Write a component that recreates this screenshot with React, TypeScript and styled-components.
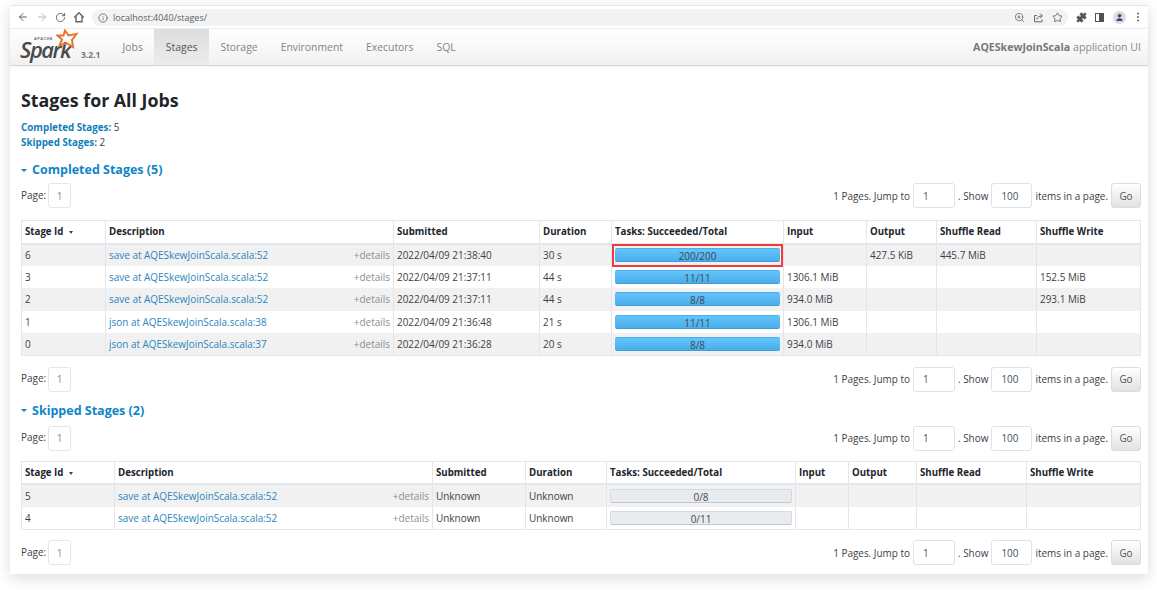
import React from "react";
import styled, { createGlobalStyle } from "styled-components";
import { ArrowLeft, ArrowRight, RotateCw, Info, ZoomIn, Star, Puzzle, User } from "lucide-react";

const Global = createGlobalStyle`
  html, body { margin: 0; padding: 0; background: #fff; }
  body { font-family: "Open Sans", "Liberation Sans", sans-serif; font-size: 9.95px; color: #3d4146; }
  * { box-sizing: border-box; }
`;
const Page = styled.div`padding: 5px 9px 0 10px; width: 1157px; height: 590px; overflow: hidden;`;
const Panel = styled.div`
  height: 569px; background: #fff; display: flex; flex-direction: column;
  box-shadow: 0 4px 14px rgba(0,0,0,.14); border-top: 1px solid #e4e6e9;
`;
const Chrome = styled.div`height: 22px; display: flex; align-items: center; padding: 0 9px 0 7px; background: #fff; color: #5f6368; flex: none;`;
const Nav = styled.div`display: flex; align-items: center; gap: 7px; margin-right: 7px; svg { flex: none; }`;
const Pill = styled.div`
  flex: 1; height: 17px; border-radius: 9px; background: #f1f3f4; display: flex; align-items: center;
  padding: 0 5px 0 6px; gap: 5px; font-size: 9px; color: #5a5e62; margin-top: 1px;
`;
const Url = styled.span`flex: 1;`;
const PillTools = styled.div`display: flex; align-items: center; gap: 8px;`;
const Ext = styled.div`display: flex; align-items: center; gap: 8.5px; margin-left: 7.5px;`;
const SideIcon = styled.span`width: 9px; height: 9px; border: 1.4px solid #4f5357; display: flex; justify-content: flex-end; &::after { content: ""; width: 4px; background: #4f5357; }`;
const Avatar = styled.span`width: 13px; height: 13px; border-radius: 50%; background: #d7dee8; display: flex; align-items: center; justify-content: center; color: #3c4a5e;`;
const Dots = styled.span`width: 2px; height: 2px; background: #5f6368; border-radius: 50%; box-shadow: 0 -3.5px 0 #5f6368, 0 3.5px 0 #5f6368; margin-left: 3px;`;
const Navbar = styled.div`
  height: 38px; flex: none; display: flex; align-items: stretch; padding: 0 7px 0 10px; font-size: 10.4px;
  background: linear-gradient(#fff, #f1f1f1); border-bottom: 1px solid #d6d6d6; border-top: 1px solid #eceeef;
  box-shadow: 0 1px 3px rgba(0,0,0,.05);
`;
const Brand = styled.div`width: 91px; flex: none; position: relative;`;
const LogoWord = styled.span`
  position: absolute; left: 0; top: 12px; font: italic 600 22px/16px "Open Sans", sans-serif; letter-spacing: -1.5px; color: #4a4a4a;
`;
const LogoApache = styled.span`position: absolute; left: 14px; top: 8px; font: 700 3.6px/4px "Liberation Sans", sans-serif; letter-spacing: .7px; color: #666;`;
const LogoStar = styled.svg`position: absolute; left: 36px; top: 0;`;
const Version = styled.span`position: absolute; left: 61px; top: 21px; font-size: 8.5px; font-weight: 700; color: #777; line-height: 10px;`;
const Tab = styled.div<{ $active?: boolean }>`
  padding: 0 11.5px; display: flex; align-items: center; color: ${(p) => (p.$active ? "#555" : "#838383")};
  background: ${(p) => (p.$active ? "linear-gradient(#dcdcdc, #ececec)" : "none")};
`;
const AppName = styled.div`margin-left: auto; display: flex; align-items: center; gap: 3px; color: #8a8a8a; font-size: 10.6px;`;
const AppStrong = styled.strong`color: #777; font-weight: 700;`;
const Main = styled.div`padding: 0 7px 0 11px; flex: 1; display: flex; flex-direction: column;`;
const Title = styled.h3`margin: 22px 0 0; font-size: 17.8px; line-height: 24px; font-weight: 700; color: #212529; height: 24px;`;
const Summary = styled.div`margin-top: 8px; display: flex; flex-direction: column; line-height: 15px;`;
const SumRow = styled.div`color: #3d4146;`;
const SumLabel = styled.strong`color: #0f7fb8; font-weight: 700; font-size: 9.8px;`;
const Section = styled.h4<{ $top: number }>`
  margin: ${(p) => p.$top}px 0 0; font-size: 12.5px; line-height: 18px; height: 18px; font-weight: 700; color: #0d86c6;
  display: flex; align-items: center; gap: 5px;
`;
const Caret = styled.span`width: 0; height: 0; border-left: 3px solid transparent; border-right: 3px solid transparent; border-top: 3.5px solid #0d86c6;`;
const PageRow = styled.div<{ $top: number; $bottom: number }>`
  margin: ${(p) => p.$top}px 0 ${(p) => p.$bottom}px; height: 25px; display: flex; align-items: center; justify-content: space-between;
`;
const PageLeft = styled.div`display: flex; align-items: flex-start; height: 25px; gap: 2px; span { margin-top: 4.5px; line-height: 15px; }`;
const PageBox = styled.div`width: 23px; height: 25px; border: 1px solid #e3e6ea; border-radius: 3px; display: flex; align-items: center; justify-content: center; color: #6f93aa; background: #fff;`;
const PageRight = styled.div`display: flex; align-items: center; gap: 3px; white-space: nowrap;`;
const Field = styled.div<{ $w: number }>`width: ${(p) => p.$w}px; height: 25px; border: 1px solid #dfe2e6; border-radius: 3px; padding-left: 9px; display: flex; align-items: center; color: #495057;`;
const Go = styled.div`width: 30px; height: 25px; border: 1px solid #dcdcdc; border-radius: 3px; background: linear-gradient(#fff, #e2e2e2); display: flex; align-items: center; justify-content: center; color: #555;`;
const Table = styled.table`width: 1119px; border-collapse: collapse; table-layout: fixed; border: 1px solid #e3e6ea;`;
const Col = styled.col<{ $w: number }>`width: ${(p) => p.$w}px;`;
const Th = styled.th`
  height: 23px; padding: 0 3px; text-align: left; font-weight: 700; font-size: 9.7px; color: #212529; border: 1px solid #e3e6ea; border-bottom-width: 2px; white-space: nowrap;
`;
const SortMark = styled.span`display: inline-block; margin-left: 6px; width: 0; height: 0; border-left: 2.5px solid transparent; border-right: 2.5px solid transparent; border-top: 3.5px solid #444; vertical-align: middle;`;
const Tr = styled.tr<{ $odd: boolean; $h: number }>`height: ${(p) => p.$h}px; background: ${(p) => (p.$odd ? "#f1f1f2" : "#fff")};`;
const Td = styled.td`padding: 0 3px; border-left: 1px solid #e3e6ea; border-right: 1px solid #e3e6ea; white-space: nowrap; color: #3d4146;`;
const DescCell = styled.div`display: flex; justify-content: space-between; align-items: center;`;
const Link = styled.span`color: #2a86bd;`;
const Details = styled.span`color: #8b8f93;`;
const TaskTd = styled.td`padding: 0 3px; border-left: 1px solid #e3e6ea; border-right: 1px solid #e3e6ea; position: relative;`;
const Marker = styled.span`position: absolute; left: 0; right: 0; top: -1px; bottom: -1px; border: 2px solid #f23b3b; pointer-events: none;`;
const Bar = styled.div<{ $done: boolean }>`
  height: 14px; border-radius: 2px; text-align: center; line-height: 14px; color: #3d4a55;
  background: ${(p) => (p.$done ? "linear-gradient(#64c5fb, #4aaeea)" : "#e9ecef")};
  border: 1px solid ${(p) => (p.$done ? "transparent" : "#d6dade")};
  border-bottom-color: ${(p) => (p.$done ? "#3f9bd6" : "#c2c6ca")};
`;

type Row = { id: string; desc: string; sub: string; dur: string; tasks: string; done: boolean; mark?: boolean; input?: string; output?: string; read?: string; write?: string };
const completed: Row[] = [
  { id: "6", desc: "save at AQESkewJoinScala.scala:52", sub: "2022/04/09 21:38:40", dur: "30 s", tasks: "200/200", done: true, mark: true, output: "427.5 KiB", read: "445.7 MiB" },
  { id: "3", desc: "save at AQESkewJoinScala.scala:52", sub: "2022/04/09 21:37:11", dur: "44 s", tasks: "11/11", done: true, input: "1306.1 MiB", write: "152.5 MiB" },
  { id: "2", desc: "save at AQESkewJoinScala.scala:52", sub: "2022/04/09 21:37:11", dur: "44 s", tasks: "8/8", done: true, input: "934.0 MiB", write: "293.1 MiB" },
  { id: "1", desc: "json at AQESkewJoinScala.scala:38", sub: "2022/04/09 21:36:48", dur: "21 s", tasks: "11/11", done: true, input: "1306.1 MiB" },
  { id: "0", desc: "json at AQESkewJoinScala.scala:37", sub: "2022/04/09 21:36:28", dur: "20 s", tasks: "8/8", done: true, input: "934.0 MiB" },
];
const skipped: Row[] = [
  { id: "5", desc: "save at AQESkewJoinScala.scala:52", sub: "Unknown", dur: "Unknown", tasks: "0/8", done: false },
  { id: "4", desc: "save at AQESkewJoinScala.scala:52", sub: "Unknown", dur: "Unknown", tasks: "0/11", done: false },
];

const Pager = ({ top, bottom }: { top: number; bottom: number }) => (
  <PageRow $top={top} $bottom={bottom}>
    <PageLeft><span>Page:</span><PageBox>1</PageBox></PageLeft>
    <PageRight>
      <span>1 Pages. Jump to</span><Field $w={42}>1</Field><span>. Show</span><Field $w={41}>100</Field><span>items in a page.</span><Go>Go</Go>
    </PageRight>
  </PageRow>
);

const Stages = ({ rows, cols }: { rows: Row[]; cols: number[] }) => (
  <Table>
    <colgroup>{cols.map((w, i) => <Col key={i} $w={w} />)}</colgroup>
    <thead>
      <tr>
        <Th>Stage Id<SortMark /></Th><Th>Description</Th><Th>Submitted</Th><Th>Duration</Th><Th>Tasks: Succeeded/Total</Th>
        <Th>Input</Th><Th>Output</Th><Th>Shuffle Read</Th><Th>Shuffle Write</Th>
      </tr>
    </thead>
    <tbody>
      {rows.map((r, i) => (
        <Tr key={r.id} $odd={i % 2 === 0} $h={22.4}>
          <Td>{r.id}</Td>
          <Td><DescCell><Link>{r.desc}</Link><Details>+details</Details></DescCell></Td>
          <Td>{r.sub}</Td>
          <Td>{r.dur}</Td>
          <TaskTd><Bar $done={r.done}>{r.tasks}</Bar>{r.mark && <Marker />}</TaskTd>
          <Td>{r.input}</Td><Td>{r.output}</Td><Td>{r.read}</Td><Td>{r.write}</Td>
        </Tr>
      ))}
    </tbody>
  </Table>
);

export default function App() {
  return (
    <Page>
      <Global />
      <Panel>
        <Chrome>
          <Nav>
            <ArrowLeft size={12} strokeWidth={2} />
            <ArrowRight size={12} strokeWidth={2} color="#b5b8bb" />
            <RotateCw size={11} strokeWidth={2} />
            <svg width="12" height="12" viewBox="0 0 14 14" fill="none" stroke="currentColor" strokeWidth="1.6">
              <path d="M1.5 7.5 L7 2 L12.5 7.5 M3.5 6 V12.5 H10.5 V6" />
            </svg>
          </Nav>
          <Pill>
            <Info size={10} strokeWidth={1.8} />
            <Url>localhost:4040/stages/</Url>
            <PillTools>
              <ZoomIn size={11} strokeWidth={1.6} />
              <svg width="11" height="11" viewBox="0 0 14 14" fill="none" stroke="currentColor" strokeWidth="1.2">
                <path d="M5 4.5H2v8h9.5V9.5" />
                <path d="M5 9.5C5 6.5 8 5 11.5 5M9 2l3 3-3 3" />
              </svg>
              <Star size={11} strokeWidth={1.8} />
            </PillTools>
          </Pill>
          <Ext>
            <Puzzle size={11} fill="#4f5357" strokeWidth={1.5} />
            <SideIcon />
            <Avatar><User size={9} fill="#3c4a5e" strokeWidth={1.5} /></Avatar>
            <Dots />
          </Ext>
        </Chrome>
        <Navbar>
          <Brand>
            <LogoWord>Spark</LogoWord>
            <LogoApache>APACHE</LogoApache>
            <LogoStar width="24" height="22" viewBox="0 0 24 22">
              <path d="M9 1.5 L12.5 6.5 L20.5 5 L16 11 L17 18 L10.5 14 L3.5 16.5 L6 10.5 L1.5 6.5 L7.5 6.5 Z" fill="none" stroke="#e8752e" strokeWidth="2" />
            </LogoStar>
            <Version>3.2.1</Version>
          </Brand>
          <Tab>Jobs</Tab>
          <Tab $active>Stages</Tab>
          <Tab>Storage</Tab>
          <Tab>Environment</Tab>
          <Tab>Executors</Tab>
          <Tab>SQL</Tab>
          <AppName><AppStrong>AQESkewJoinScala</AppStrong> application UI</AppName>
        </Navbar>
        <Main>
          <Title>Stages for All Jobs</Title>
          <Summary>
            <SumRow><SumLabel>Completed Stages:</SumLabel> 5</SumRow>
            <SumRow><SumLabel>Skipped Stages:</SumLabel> 2</SumRow>
          </Summary>
          <Section $top={11}><Caret />Completed Stages (5)</Section>
          <Pager top={4} bottom={12} />
          <Stages rows={completed} cols={[84, 288, 146, 72, 172, 83, 70, 100, 104]} />
          <Pager top={11} bottom={0} />
          <Section $top={10}><Caret />Skipped Stages (2)</Section>
          <Pager top={6} bottom={10} />
          <Stages rows={skipped} cols={[93, 318, 93, 81, 189, 53, 68, 110, 114]} />
          <Pager top={10.5} bottom={0} />
        </Main>
      </Panel>
    </Page>
  );
}
